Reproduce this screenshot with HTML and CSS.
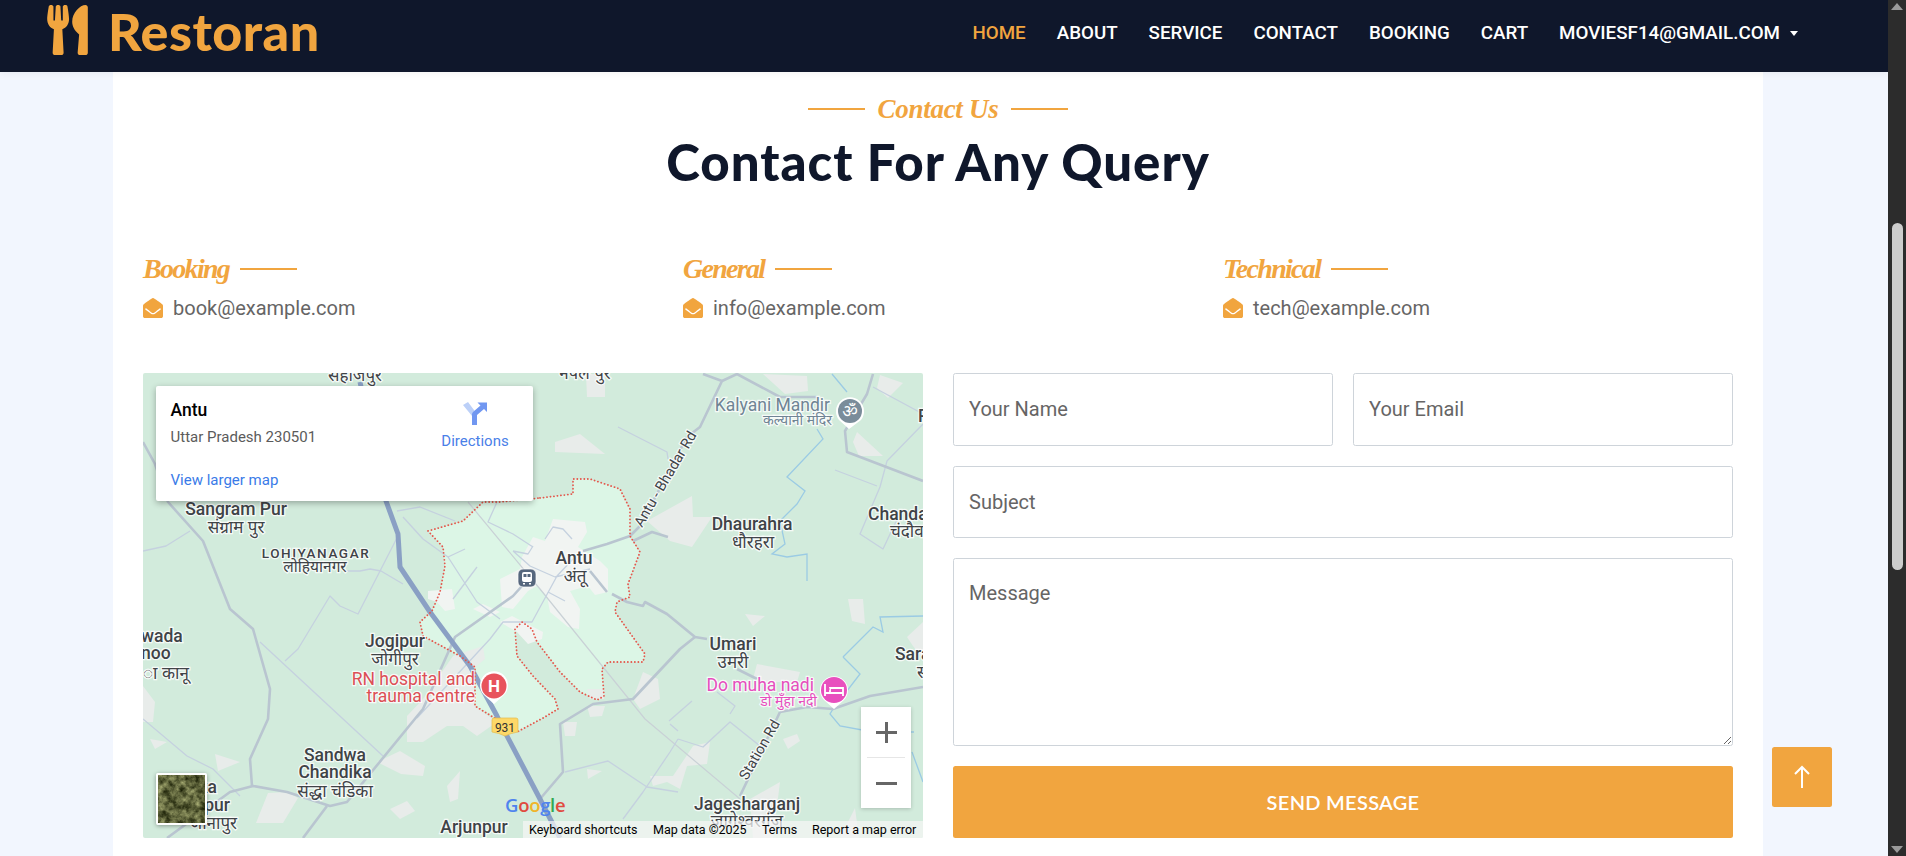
FILE: index.html
```html
<!DOCTYPE html>
<html lang="en">
<head>
<meta charset="utf-8">
<title>Restoran - Contact</title>
<link rel="stylesheet" href="styles.css">
</head>
<body>
<div class="viewport">
  <nav class="navbar">
    <a class="brand">
      <svg class="brand-icon" viewBox="0 0 416 512"><path d="M207.9 15.2c.8 4.7 16.1 94.5 16.1 128.8 0 52.3-27.8 89.6-68.9 104.6L168 486.7c.7 13.7-10.2 25.3-24 25.3H80c-13.7 0-24.7-11.5-24-25.3l12.9-238.1C27.7 233.6 0 196.2 0 144 0 109.6 15.3 19.9 16.1 15.2 19.3-5.1 61.4-5.4 64 16.3v141.2c1.3 3.4 15.1 3.2 16 0 1.4-25.3 7.9-139.2 8-141.8 3.3-20.8 44.7-20.8 47.9 0 .2 2.7 6.6 116.5 8 141.8.9 3.2 14.8 3.4 16 0V16.3c2.6-21.6 44.8-21.4 48-1.1zm119.2 285.7l-15 185.1c-1.2 14 9.9 26 23.9 26h56c13.3 0 24-10.7 24-24V24c0-13.2-10.7-24-24-24-82.5 0-221.4 178.5-64.9 300.9z"/></svg>
      <span class="brand-name">Restoran</span>
    </a>
    <ul class="nav-links">
      <li class="active">Home</li>
      <li>About</li>
      <li>Service</li>
      <li>Contact</li>
      <li>Booking</li>
      <li>Cart</li>
      <li class="dropdown">moviesf14@gmail.com<span class="caret"></span></li>
    </ul>
  </nav>

  <main class="container">
    <header class="section-title">
      <div class="eyebrow"><span class="rule"></span><span class="script">Contact Us</span><span class="rule"></span></div>
      <h1>Contact For Any Query</h1>
    </header>

    <section class="info-row">
      <div class="info">
        <h5 class="info-head"><span class="script">Booking</span><span class="rule"></span></h5>
        <p class="info-mail"><svg class="mail-icon" viewBox="0 0 512 512"><use href="#env"/></svg>book@example.com</p>
      </div>
      <div class="info">
        <h5 class="info-head"><span class="script">General</span><span class="rule"></span></h5>
        <p class="info-mail"><svg class="mail-icon" viewBox="0 0 512 512"><use href="#env"/></svg>info@example.com</p>
      </div>
      <div class="info">
        <h5 class="info-head"><span class="script">Technical</span><span class="rule"></span></h5>
        <p class="info-mail"><svg class="mail-icon" viewBox="0 0 512 512"><use href="#env"/></svg>tech@example.com</p>
      </div>
    </section>

    <section class="contact-row">
      <div class="map">
        <svg class="map-canvas" viewBox="0 0 780 465" width="780" height="465">
          <defs>
            <symbol id="env" viewBox="0 0 512 512"><path d="M512 464c0 26.51-21.49 48-48 48H48c-26.51 0-48-21.49-48-48V200.724a48 48 0 0 1 18.387-37.776c24.913-19.529 45.501-35.365 164.2-121.511C199.412 29.17 232.797-.347 256 .003c23.198-.354 56.596 29.172 73.413 41.433 118.687 86.137 139.303 101.995 164.2 121.512A48 48 0 0 1 512 200.724V464zm-65.666-196.605c-2.563-3.728-7.7-4.595-11.339-1.907-22.845 16.873-55.462 40.705-105.582 77.079-16.825 12.266-50.21 41.781-73.413 41.43-23.211.344-56.559-29.143-73.413-41.43-50.114-36.37-82.734-60.204-105.582-77.079-3.639-2.688-8.776-1.821-11.339 1.907l-9.072 13.196a7.998 7.998 0 0 0 1.839 10.967c22.887 16.899 55.454 40.69 105.303 76.868 20.274 14.781 56.524 47.813 92.264 47.573 35.724.242 71.961-32.771 92.263-47.573 49.85-36.179 82.418-59.97 105.303-76.868a7.998 7.998 0 0 0 1.839-10.967l-9.071-13.196z"/></symbol>
            <filter id="sat-noise" x="0" y="0" width="100%" height="100%" color-interpolation-filters="sRGB">
              <feTurbulence type="fractalNoise" baseFrequency=".14" numOctaves="4" seed="7"/>
              <feColorMatrix type="matrix" values=".9 0 0 0 -.08  .9 0 0 0 -.06  .7 0 0 0 -.12  0 0 0 0 1"/>
            </filter>
          </defs>
          <rect class="land" width="780" height="465"/>
          <path class="zone" d="M397 125L430 121L430 106L447 106L477 116L487 136L487 163L497 179L485 211L487 224L474 229L472 239L502 281L500 289L465 289L459 296L461 323L454 327L437 319L417 299L394 269L389 256L379 249L372 256L374 283L390 303L412 326L415 336L400 345L374 359L350 344L332 333L332 294L317 283L280 263L277 249L289 238L297 219L302 193L300 174L285 158L320 148L340 129L357 129Z"/>
          <g class="urban">
            <path d="M504 148L549 123L550 144L569 144L549 174L527 168Z"/>
            <path d="M443 1L462 1L462 24L444 24Z"/>
            <path d="M412 69L437 61L462 81L412 79Z"/>
            <path d="M620 1L664 3L665 18L642 21Z"/>
            <path d="M714 59L740 83L716 83L710 69Z"/>
            <path d="M264 343L280 326L310 283L340 273L342 286L330 296L332 333L354 349L334 363L320 353L304 353L280 369L264 369Z"/>
            <path d="M125 420L144 419L155 425L140 450L113 450Z"/>
            <path d="M247 436L264 428L272 438L257 446Z"/>
            <path d="M304 413L317 398L315 426L307 429Z"/>
            <path d="M72 381L97 389L75 398Z"/>
            <path d="M7 366L24 369L12 376Z"/>
            <path d="M0 313L12 329L10 349L0 349Z"/>
            <path d="M234 389L257 378L282 393L280 403L258 401Z"/>
            <path d="M444 396L459 398L445 406Z"/>
            <path d="M507 403L530 403L550 373L567 369L564 391L544 393L537 416L524 409L510 413Z"/>
            <path d="M640 366L654 361L657 368L645 376Z"/>
            <path d="M614 291L657 299L654 309L620 309L610 306Z"/>
            <path d="M705 226L720 226L722 251L709 248Z"/>
            <path d="M602 241L622 243L610 253Z"/>
            <path d="M764 264L780 249L780 286L770 273Z"/>
            <path d="M420 349L434 349L432 363L422 363Z"/>
            <path d="M444 316L460 316L461 326L447 326Z"/>
            <path d="M444 333L462 333L459 343L447 344Z"/>
            <path d="M490 326L500 299L515 306L517 326L497 336Z"/>
            <path d="M607 426L637 409L630 465L610 465Z"/>
            <path d="M737 2L760 10L745 25L734 15Z"/>
            <path d="M697 465L712 435L716 465Z"/>
          </g>
          <g class="town">
            <path d="M390 164L402 168L410 146L442 149L444 159L435 174L457 188L465 196L465 219L452 222L445 213L427 218L437 236L436 256L425 254L407 239L404 223L394 213L385 218L370 236L359 234L357 206L377 196L379 184Z"/>
            <path d="M285 218L309 216L312 236L302 238L294 229L285 226Z"/>
            <path d="M330 236L340 231L357 239L347 244Z"/>
            <path d="M357 249L369 243L400 259L399 266L385 271L374 259Z"/>
          </g>
          <g class="river">
            <path d="M689 1L704 19M674 56L680 66L644 104L662 118L654 131L637 148L642 171L629 181L644 184L664 181L664 208"/>
            <path d="M700 284L730 254L740 259L737 244L780 243M700 284L717 301L690 336L687 341L697 353L730 359L771 359M769 379L780 409"/>
          </g>
          <path class="road-faint" d="M325 129L397 216L502 346L597 426"/>
          <g class="road-thin">
            <path d="M0 178L23 173L47 158M117 269L240 383M142 288L155 276L187 223L197 233L215 241L257 159"/>
            <path d="M200 198L217 198L227 196L238 198L260 211M254 138L277 134L312 148M260 144L280 166L305 184L322 176M305 184L334 229L357 246M310 226L334 194"/>
            <path d="M354 129L345 149L370 161L390 174M402 166L410 154L420 156L429 166M370 178L387 193L412 204M370 178L385 181L390 173M405 219L422 228"/>
            <path d="M274 345L347 266L360 249L389 249L414 203L430 186M412 204L447 196"/>
            <path d="M475 54L524 79L525 86M692 97L734 113M730 14L780 41M780 51L744 88L737 114L717 161L740 176L757 140"/>
            <path d="M574 319L592 333L587 341M526 348L549 328M527 351L535 358M535 366L560 374L587 349L617 373M535 366L527 379L500 419L480 446"/>
            <path d="M422 399L465 388L504 414L535 419M0 346L44 383L70 396L97 423"/>
          </g>
          <g class="road">
            <path d="M560 1L579 8L594 1L637 24L674 24M579 8L557 54L544 64L497 153L487 163L464 171L440 178M490 168L509 159L525 164"/>
            <path d="M730 1L724 21L702 58L704 79L780 108"/>
            <path d="M447 198L464 219M469 221L484 229L500 233L502 229L524 241L552 264L564 266M552 264L537 276L490 326L450 331L417 351L420 399L397 426"/>
            <path d="M594 296L614 306M637 339L597 423M637 339L664 334L690 336L727 323L780 314"/>
            <path d="M0 69L12 91L25 129L60 168L87 236L110 256L127 316L125 346L107 386L109 413"/>
            <path d="M24 465L87 419L110 413L144 419L187 433L204 429L280 336L312 264L370 223L379 213"/>
            <path d="M184 433L160 465"/>
          </g>
          <path class="highway" d="M217 9L243 128L255 161L257 194L287 239L327 293L354 343L364 363L397 426L417 465"/>
          <path class="boundary" d="M397 125L430 121L430 106L447 106L477 116L487 136L487 163L497 179L485 211L487 224L474 229L472 239L502 281L500 289L465 289L459 296L461 323L454 327L437 319L417 299L394 269L389 256L379 249L372 256L374 283L390 303L412 326L415 336L400 345L374 359L350 344L332 333L332 294L317 283L280 263L277 249L289 238L297 219L302 193L300 174L285 158L320 148L340 129L357 129Z"/>

          <g class="lbl">
            <text x="212" y="8" text-anchor="middle" class="hi">सहाजपुर</text>
            <text x="442" y="6" text-anchor="middle" class="hi">नपल पुर</text>
            <text x="93" y="142" text-anchor="middle">Sangram Pur</text>
            <text x="93" y="160" text-anchor="middle" class="hi">संग्राम पुर</text>
            <text x="173" y="185" text-anchor="middle" class="spaced">LOHIYANAGAR</text>
            <text x="172" y="199" text-anchor="middle" class="hi small">लोहियानगर</text>
            <text x="431" y="191" text-anchor="middle">Antu</text>
            <text x="432" y="209" text-anchor="middle" class="hi">अंतू</text>
            <text x="609" y="157" text-anchor="middle">Dhaurahra</text>
            <text x="610" y="175" text-anchor="middle" class="hi">धौरहरा</text>
            <text x="725" y="147">Chanda</text>
            <text x="747" y="164" class="hi">चंदौव</text>
            <text x="775" y="49">P</text>
            <text x="-2" y="269">wada</text>
            <text x="-2" y="286">noo</text>
            <text x="0" y="306" class="hi">ा कानू</text>
            <text x="252" y="274" text-anchor="middle">Jogipur</text>
            <text x="252" y="292" text-anchor="middle" class="hi">जोगीपुर</text>
            <text x="192" y="388" text-anchor="middle">Sandwa</text>
            <text x="192" y="405" text-anchor="middle">Chandika</text>
            <text x="192" y="424" text-anchor="middle" class="hi">सं‍द्धा चंडिका</text>
            <text x="74" y="420" text-anchor="end">Aka</text>
            <text x="87" y="438" text-anchor="end">Jaipur</text>
            <text x="94" y="456" text-anchor="end" class="hi">जानापुर</text>
            <text x="331" y="460" text-anchor="middle">Arjunpur</text>
            <text x="590" y="277" text-anchor="middle">Umari</text>
            <text x="590" y="295" text-anchor="middle" class="hi">उमरी</text>
            <text x="604" y="437" text-anchor="middle">Jagesharganj</text>
            <text x="604" y="454" text-anchor="middle" class="hi">जागेश्वरगंज</text>
            <text x="752" y="287">Sara</text>
            <text x="774" y="305" class="hi">स</text>
            <text class="road-name" transform="translate(499 155) rotate(-59.5)">Antu - Bhadar Rd</text>
            <text class="road-name" transform="translate(604 408) rotate(-60)">Station Rd</text>
          </g>
          <g class="poi">
            <text class="poi-gray" x="687" y="38" text-anchor="end">Kalyani Mandir</text>
            <text class="poi-gray hi" x="689" y="52" text-anchor="end">कल्यानी मंदिर</text>
            <text class="poi-red" x="332" y="312" text-anchor="end">RN hospital and</text>
            <text class="poi-red" x="332" y="329" text-anchor="end">trauma centre</text>
            <text class="poi-pink" x="671" y="318" text-anchor="end">Do muha nadi</text>
            <text class="poi-pink hi" x="674" y="333" text-anchor="end">डो मुँहा नदी</text>
          </g>

          <g class="pin-temple">
            <path class="pin-edge" d="M706 56L696 47A14 14 0 1 1 718 47Z"/>
            <circle cx="707" cy="38" r="12"/>
            <text x="707" y="44" text-anchor="middle">ॐ</text>
          </g>
          <g class="pin-hospital">
            <path class="pin-edge" d="M351 331L341 322A14 14 0 1 1 361 322Z"/>
            <circle cx="351" cy="313" r="12.5"/>
            <text x="351" y="319" text-anchor="middle">H</text>
          </g>
          <g class="pin-hotel">
            <path class="pin-edge" d="M691 336L681 327A14 14 0 1 1 701 327Z"/>
            <circle cx="691" cy="317" r="13"/>
            <path class="bed" d="M682 311V323M682 320H700V323M700 320V315H687V320" />
            <circle class="bed-head" cx="685" cy="316" r="1.6"/>
          </g>
          <g class="station">
            <rect x="375" y="196" width="18" height="18" rx="5"/>
            <rect class="station-body" x="379" y="199" width="10" height="10" rx="2"/>
            <rect class="station-win" x="380.5" y="201" width="3" height="3"/>
            <rect class="station-win" x="384.5" y="201" width="3" height="3"/>
            <path class="station-win" d="M380 210h2v1.5h-2zM386 210h2v1.5h-2z"/>
          </g>
          <g class="shield">
            <path d="M351 345H373Q375 345 375 347V359Q368 360 362 363Q356 360 349 359V347Q349 345 351 345Z"/>
            <text x="362" y="359" text-anchor="middle">931</text>
          </g>
          <text class="google" y="439" x="362"><tspan class="g-b">G</tspan><tspan class="g-r">o</tspan><tspan class="g-y">o</tspan><tspan class="g-b">g</tspan><tspan class="g-g">l</tspan><tspan class="g-r">e</tspan></text>
        </svg>

        <div class="place-card">
          <div class="place-top">
            <div>
              <div class="place-name">Antu</div>
              <div class="place-addr">Uttar Pradesh 230501</div>
            </div>
            <a class="directions">
              <svg class="dir-icon" viewBox="0 0 24 24"><path class="dir-light" d="M0 4L5 1L14 13V24H9V15Z"/><path class="dir-dark" d="M9 24V13.5Q9 12 10 11L17.5 4.5L14.5 1.5H24V11L21 8L14 14V24Z"/></svg>
              <span>Directions</span>
            </a>
          </div>
          <a class="larger">View larger map</a>
        </div>

        <div class="zoom-ctl">
          <button class="zoom-btn" aria-label="Zoom in"><svg viewBox="0 0 21 21"><path d="M0 10.5H21M10.5 0V21"/></svg></button>
          <span class="zoom-sep"></span>
          <button class="zoom-btn" aria-label="Zoom out"><svg viewBox="0 0 21 21"><path d="M0 10.5H21"/></svg></button>
        </div>

        <div class="sat-thumb">
          <svg viewBox="0 0 47 48"><rect width="47" height="48" filter="url(#sat-noise)"/></svg>
        </div>

        <div class="attribution">
          <span class="kbd">Keyboard shortcuts</span>
          <span class="data">Map data ©2025</span>
          <span class="terms">Terms</span>
          <span class="report">Report a map error</span>
        </div>
      </div>

      <form class="contact-form">
        <div class="form-pair">
          <input class="field" type="text" placeholder="Your Name">
          <input class="field" type="email" placeholder="Your Email">
        </div>
        <input class="field" type="text" placeholder="Subject">
        <textarea class="field message" placeholder="Message"></textarea>
        <button class="send" type="button">SEND MESSAGE</button>
      </form>
    </section>
  </main>

  <a class="back-top" aria-label="Back to top"><svg viewBox="0 0 16 24"><path d="M8 23V2M1 9L8 2L15 9"/></svg></a>
</div>
<aside class="scrollbar">
  <span class="arrow-up"></span>
  <span class="thumb"></span>
  <span class="arrow-down"></span>
</aside>
</body>
</html>
```
FILE: styles.css
```css
* { box-sizing: border-box; }
html, body { margin: 0; height: 856px; overflow: hidden; }
body {
  display: flex;
  font-family: Roboto, "Noto Sans", sans-serif;
  font-size: 20px;
  color: #666565;
  background: #f2f6fe;
}
.viewport { position: relative; width: 1888px; height: 856px; overflow: hidden; }

/* Nav */
.navbar {
  position: relative;
  z-index: 2;
  height: 72px;
  background: #0f172b;
  display: flex;
  justify-content: space-between;
  box-shadow: 0 2px 8px rgba(0, 0, 0, .05);
  padding: 0 90px 0 47px;
}
.brand { display: flex; align-items: flex-start; color: #f1a53f; }
.brand-icon { width: 41px; height: 50px; margin-top: 5px; fill: #f1a53f; }
.brand-name {
  margin-left: 20px;
  font-family: Lato, sans-serif;
  font-weight: 900;
  font-size: 52px;
  line-height: 62px;
  letter-spacing: .5px;
}
.nav-links {
  list-style: none;
  margin: 0;
  padding: 0;
  display: flex;
  gap: 31px;
  font-weight: 500;
  font-size: 18.75px;
  line-height: 66px;
  text-transform: uppercase;
  color: #fff;
}
.nav-links .active { color: #f1a53f; }
.caret {
  display: inline-block;
  margin-left: 10px;
  vertical-align: 3px;
  border-top: 5.5px solid #fff;
  border-left: 4.5px solid transparent;
  border-right: 4.5px solid transparent;
}

/* Container */
.container {
  width: 1650px;
  height: 784px;
  margin-left: 113px;
  padding: 0 30px;
  background: #fff;
}
.section-title { text-align: center; padding-top: 20px; }
.eyebrow { display: flex; justify-content: center; align-items: center; gap: 13px; height: 34px; }
.rule { display: block; width: 57px; height: 2px; background: #f1a53f; }
.script {
  font-family: "Liberation Serif", serif;
  font-style: italic;
  font-weight: 700;
  color: #f1a53f;
}
.eyebrow .script { font-size: 27px; letter-spacing: -.3px; }
h1 {
  margin: 6px 0 0;
  font-family: Lato, sans-serif;
  font-weight: 900;
  font-size: 51px;
  line-height: 60px;
  color: #0f172b;
  letter-spacing: 1px;
}

.info-row {
  display: grid;
  grid-template-columns: repeat(3, 510px);
  gap: 30px;
  margin-top: 54px;
}
.info-head { display: flex; align-items: center; gap: 11px; margin: 0; height: 46px; }
.info-head .script { font-size: 28px; letter-spacing: -1.7px; }
.info-mail { display: flex; align-items: center; margin: 0; height: 32px; line-height: 32px; }
.mail-icon { width: 20px; height: 20px; margin-right: 10px; fill: #f1a53f; }

/* Map */
.contact-row {
  display: grid;
  grid-template-columns: 780px 780px;
  gap: 30px;
  margin-top: 49px;
}
.map { position: relative; width: 780px; height: 465px; overflow: hidden; border-radius: 2px; }
.map-canvas { display: block; }
.land { fill: #d2ebdc; }
.zone { fill: #dcf6e6; }
.urban path { fill: #e8ecea; }
.town path { fill: #f1f4f2; }
.river path { fill: none; stroke: #9bcbe4; stroke-width: 1.3; }
.road-faint { fill: none; stroke: #c9d1d6; stroke-width: 1.2; }
.road-thin path { fill: none; stroke: #c5d1df; stroke-width: 1.3; stroke-linejoin: round; }
.road path { fill: none; stroke: #b9c5d0; stroke-width: 2.6; stroke-linejoin: round; }
.highway { fill: none; stroke: #8aa0c4; stroke-width: 5; stroke-linejoin: round; }
.boundary { fill: none; stroke: #e4574c; stroke-width: 1.8; stroke-dasharray: .1 3.4; stroke-linecap: round; stroke-linejoin: round; }

.lbl text, .poi text {
  font-family: Roboto, "Noto Sans", sans-serif;
  font-weight: 500;
  font-size: 17.5px;
  stroke: #fff;
  stroke-width: 2.5;
  stroke-opacity: .8;
  paint-order: stroke;
}
.lbl text { fill: #3f4347; }
.lbl .hi, .poi .hi { font-family: "Noto Sans", "Noto Sans Devanagari", sans-serif; font-weight: 400; font-size: 17px; }
.lbl .small { font-size: 15.5px; }
.lbl .spaced { font-size: 13.5px; letter-spacing: 1.6px; }
.lbl .road-name { font-size: 14.5px; font-weight: 400; }
.poi .poi-gray { fill: #6f8494; font-weight: 400; }
.poi .poi-red { fill: #dc4f55; font-weight: 400; }
.poi .poi-pink { fill: #e64ebd; font-weight: 400; }
.poi .hi { font-size: 14px; }

.pin-edge { fill: #fff; }
.pin-temple circle { fill: #7a8c9a; }
.pin-temple text { fill: #fff; font-family: "Noto Sans", sans-serif; font-size: 17px; }
.pin-hospital circle { fill: #e8535c; }
.pin-hospital text { fill: #fff; font-family: Roboto, sans-serif; font-weight: 700; font-size: 17px; }
.pin-hotel circle { fill: #e84fbe; }
.bed { fill: none; stroke: #fff; stroke-width: 1.8; }
.bed-head { fill: #fff; }
.station rect { fill: #56677d; stroke: #fff; stroke-width: 1; stroke-opacity: .7; }
.station .station-body { fill: #fff; stroke: none; }
.station .station-win { fill: #56677d; stroke: none; }
.station path.station-win { fill: #fff; }
.shield path { fill: #fdd868; stroke: #e2bc4f; stroke-width: .7; }
.shield text { font-family: Roboto, sans-serif; font-size: 12px; fill: #333; }
.google { font-family: "Open Sans", sans-serif; font-size: 18.5px; font-weight: 600; letter-spacing: -.3px; }
.g-b { fill: #4f84ee; }
.g-r { fill: #e04a3f; }
.g-y { fill: #f0b429; }
.g-g { fill: #33a852; }

.place-card {
  position: absolute;
  left: 13px;
  top: 13px;
  width: 377px;
  height: 115px;
  padding: 14px 15px 0 14.5px;
  background: #fff;
  border-radius: 2px;
  box-shadow: 0 2px 6px rgba(0, 0, 0, .3);
}
.place-top { display: flex; justify-content: space-between; height: 71px; }
.place-name { font-weight: 500; font-size: 17.5px; line-height: 20px; color: #000; }
.place-addr { margin-top: 8px; font-size: 15px; line-height: 18px; color: #5b5b5b; }
.directions { display: flex; flex-direction: column; align-items: center; width: 68px; margin-top: 1px; font-size: 15px; color: #4a80e8; margin-right: 9px; }
.dir-icon { width: 24px; height: 24px; }
.dir-light { fill: #bcd0f8; }
.dir-dark { fill: #7197f1; }
.directions span { line-height: 18px; margin-top: 7px; }
.larger { display: block; font-size: 15px; line-height: 18px; color: #3a7be8; }

.zoom-ctl {
  position: absolute;
  left: 718px;
  top: 334px;
  width: 50px;
  height: 101px;
  padding: 0 6px;
  display: flex;
  flex-direction: column;
  align-items: center;
  background: #fff;
  box-shadow: 0 1px 4px rgba(0, 0, 0, .2);
}
.zoom-btn { width: 38px; height: 50px; padding: 0; border: 0; background: none; display: flex; align-items: center; justify-content: center; }
.zoom-btn svg { width: 21px; height: 21px; }
.zoom-btn path { fill: none; stroke: #666; stroke-width: 3; }
.zoom-sep { width: 38px; height: 1px; background: #e6e6e6; }

.sat-thumb {
  position: absolute;
  left: 13px;
  top: 400px;
  width: 51px;
  height: 52px;
  border: 2px solid #fff;
  border-radius: 2px;
  overflow: hidden;
  box-shadow: 0 1px 4px rgba(0, 0, 0, .35);
}
.sat-thumb svg { display: block; width: 100%; height: 100%; }

.attribution {
  position: absolute;
  left: 380px;
  right: 0;
  top: 448px;
  height: 17px;
  background: rgba(245, 245, 245, .72);
  font-size: 12.5px;
  line-height: 17px;
  color: #000;
}
.attribution span { position: absolute; top: 0; white-space: nowrap; }
.attribution .kbd { left: 6px; }
.attribution .data { left: 130px; }
.attribution .terms { left: 239px; }
.attribution .report { left: 289px; }

/* Form */
.contact-form { display: flex; flex-direction: column; gap: 20px; }
.form-pair { display: grid; grid-template-columns: 1fr 1fr; gap: 20px; }
.field {
  width: 100%;
  height: 72.5px;
  padding: 0 15px;
  font-family: Roboto, sans-serif;
  font-size: 20px;
  color: #666565;
  background: #fff;
  border: 1px solid #ced4da;
  border-radius: 2.5px;
  outline: none;
  display: block;
}
.field::placeholder { color: #666565; opacity: 1; }
.message { height: 188px; padding-top: 22px; resize: vertical; }
.send {
  height: 72px;
  padding-bottom: 2px;
  border: 0;
  border-radius: 2.5px;
  background: #f1a53f;
  color: #fff;
  font-family: Lato, sans-serif;
  font-weight: 600;
  font-size: 20px;
  letter-spacing: .3px;
}

/* Back to top */
.back-top {
  position: absolute;
  left: 1772px;
  top: 747px;
  width: 60px;
  height: 60px;
  display: flex;
  align-items: center;
  justify-content: center;
  background: #f1a53f;
  border-radius: 2.5px;
}
.back-top svg { width: 16px; height: 24px; }
.back-top path { fill: none; stroke: #fff; stroke-width: 2; }

/* Scrollbar */
.scrollbar { position: relative; width: 18px; height: 856px; background: #2c2c2c; flex: none; }
.thumb { position: absolute; left: 4px; top: 223px; width: 11px; height: 347px; background: #cdcdcd; border-radius: 6px; }
.arrow-up, .arrow-down { position: absolute; left: 3px; border-left: 6px solid transparent; border-right: 6px solid transparent; }
.arrow-up { top: 3px; border-bottom: 7px solid #9a9a9a; }
.arrow-down { bottom: 3px; border-top: 7px solid #9a9a9a; }
```
